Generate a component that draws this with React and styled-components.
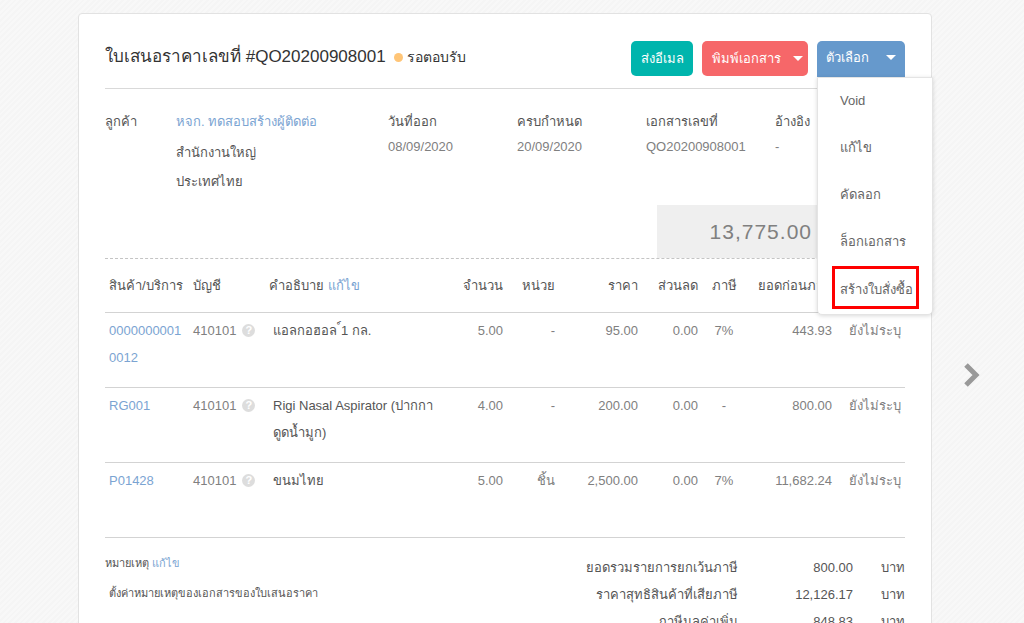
import React from 'react';
import styled, { createGlobalStyle } from 'styled-components';

const GlobalStyle = createGlobalStyle`
  *, *::before, *::after {
    box-sizing: border-box;
  }
  body {
    margin: 0;
    min-height: 100vh;
    background: #f7f7f7 repeating-linear-gradient(135deg, #f8f8f8 0 2px, #f5f5f5 2px 4px);
    color: #808080;
    font-family: 'Liberation Sans', Arial, sans-serif;
    font-size: 13px;
    line-height: 27px;
    overflow: hidden;
  }
  button {
    font: inherit;
    border: none;
    cursor: pointer;
  }
`;

const Page = styled.div`
  display: grid;
  grid-template-columns: 78px minmax(0, 1fr) 92px;
  padding-top: 13px;
  height: 100vh;
`;

const Card = styled.main`
  grid-column: 2;
  min-height: 720px;
  padding: 27px 26px;
  background: #fff;
  border: 1px solid #e2e2e2;
  border-radius: 4px;
`;

const NextButton = styled.button`
  justify-self: start;
  align-self: start;
  margin: 349px 0 0 30px;
  padding: 0;
  width: 18px;
  height: 26px;
  background: none;
  svg {
    display: block;
  }
`;

const Header = styled.header`
  display: flex;
  align-items: flex-start;
  height: 48px;
  border-bottom: 1px solid #d9d9d9;
`;

const Title = styled.h1`
  margin: 0;
  padding-top: 2px;
  color: #333;
  font-size: 17px;
  font-weight: normal;
`;

const Status = styled.span`
  display: flex;
  align-items: center;
  gap: 4px;
  margin: 3px auto 0 8px;
  color: #333;
  font-size: 14px;
  &::before {
    content: '';
    width: 9px;
    height: 9px;
    border-radius: 50%;
    background: #ffc577;
  }
`;

const Actions = styled.div`
  display: flex;
  gap: 9px;
`;

const Dropdown = styled.div`
  position: relative;
`;

const Button = styled.button`
  display: flex;
  align-items: center;
  justify-content: ${(props) => (props.$center ? 'center' : 'space-between')};
  width: ${(props) => props.$width};
  height: ${(props) => (props.$open ? '36px' : '35px')};
  padding: ${(props) => (props.$open ? '0 9px 3px' : '0 5px 0 10px')};
  ${(props) => props.$center && 'padding: 0;'}
  border-radius: ${(props) => (props.$open ? '5px 5px 0 0' : '5px')};
  background: ${(props) => props.$color};
  color: #fff;
  white-space: nowrap;
`;

const Caret = styled.span`
  border: 5px solid transparent;
  border-top-color: #fff;
  border-bottom: none;
`;

const Menu = styled.ul`
  position: absolute;
  top: 100%;
  left: 0;
  z-index: 2;
  width: 116px;
  margin: 0;
  padding: 0 0 5px;
  list-style: none;
  background: #fff;
  border: 1px solid #e4e4e4;
  border-radius: 0 0 5px 5px;
  box-shadow: 0 1px 4px rgba(0, 0, 0, 0.15);
`;

const MenuItem = styled.li`
  display: flex;
  align-items: center;
  height: ${(props) => (props.$marked ? '43px' : '47px')};
  margin: ${(props) => (props.$marked ? '0 13px 0 14px' : '0')};
  padding: ${(props) => (props.$marked ? '3px 0 0 5px' : '0 0 2px 22px')};
  border: ${(props) => (props.$marked ? '3px solid #f00' : 'none')};
`;

const MenuLink = styled.a`
  color: #666;
  text-decoration: none;
  white-space: nowrap;
`;

const Link = styled.a`
  color: #7ba4d2;
  text-decoration: none;
`;

const Info = styled.section`
  display: grid;
  grid-template-columns: 71px minmax(0, 212px) repeat(4, minmax(0, 129px));
  height: 116px;
  padding-top: 19px;
`;

const Label = styled.div`
  color: #555;
  line-height: 27px;
  white-space: nowrap;
`;

const Address = styled.div`
  padding-top: 3px;
  color: #555;
  line-height: 29px;
`;

const Value = styled.div`
  line-height: 24px;
`;

const Summary = styled.div`
  display: flex;
  justify-content: flex-end;
  border-bottom: 1px dashed #c4c4c4;
`;

const Amount = styled.div`
  width: 31%;
  height: 53px;
  padding-right: 93px;
  background: #efefef;
  font-size: 21px;
  line-height: 53px;
  letter-spacing: 1px;
  text-align: right;
`;

const Table = styled.table`
  width: 100%;
  table-layout: fixed;
  border-collapse: collapse;
`;

const Th = styled.th`
  height: 53px;
  width: ${(props) => props.$width};
  padding: 0 4px;
  border-bottom: 1px solid #d3d3d3;
  color: #555;
  font-weight: normal;
  text-align: ${(props) => props.$align || 'left'};
  white-space: nowrap;
`;

const Td = styled.td`
  height: 75px;
  padding: 4px ${(props) => (props.$inset ? '8px' : '4px')} 0;
  border-bottom: 1px solid #d3d3d3;
  color: ${(props) => (props.$inset ? '#555' : '#808080')};
  text-align: ${(props) => props.$align || 'left'};
  vertical-align: top;
  word-break: ${(props) => (props.$breakAll ? 'break-all' : 'normal')};
`;

const Help = styled.span`
  display: inline-block;
  width: 13px;
  height: 13px;
  margin-left: 6px;
  border-radius: 50%;
  background: #ddd;
  color: #fff;
  font-size: 11px;
  font-weight: bold;
  line-height: 13px;
  text-align: center;
  vertical-align: 1px;
`;

const Footer = styled.section`
  display: flex;
  justify-content: space-between;
  padding-top: 12px;
  color: #555;
`;

const Remarks = styled.div`
  font-size: 11px;
`;

const Note = styled.p`
  margin: 3px 0 0 4px;
`;

const Totals = styled.table`
  margin-top: 4px;
  border-collapse: collapse;
  text-align: right;
  th {
    padding: 0;
    font-weight: normal;
  }
  td {
    width: 115px;
    padding: 0;
  }
  td + td {
    width: 52px;
  }
`;

const menuItems = ['Void', 'แก้ไข', 'คัดลอก', 'ล็อกเอกสาร', 'สร้างใบสั่งซื้อ'];

const details = [
  ['วันที่ออก', '08/09/2020'],
  ['ครบกำหนด', '20/09/2020'],
  ['เอกสารเลขที่', 'QO20200908001'],
  ['อ้างอิง', '-'],
];

const items = [
  { code: '00000000010012', name: 'แอลกอฮอล\u00a0์1 กล.', qty: '5.00', unit: '-', price: '95.00', tax: '7%', total: '443.93' },
  { code: 'RG001', name: 'Rigi Nasal Aspirator (ปากกาดูดน้ำมูก)', qty: '4.00', unit: '-', price: '200.00', tax: '-', total: '800.00' },
  { code: 'P01428', name: 'ขนมไทย', qty: '5.00', unit: 'ชิ้น', price: '2,500.00', tax: '7%', total: '11,682.24' },
];

const totals = [
  ['ยอดรวมรายการยกเว้นภาษี', '800.00'],
  ['ราคาสุทธิสินค้าที่เสียภาษี', '12,126.17'],
  ['ภาษีมูลค่าเพิ่ม', '848.83'],
];

const App = () => {
  return (
    <Page>
      <GlobalStyle />
      <Card>
        <Header>
          <Title>ใบเสนอราคาเลขที่ #QO20200908001</Title>
          <Status>รอตอบรับ</Status>
          <Actions>
            <Button $center $width="62px" $color="#00b5ad">ส่งอีเมล</Button>
            <Button $width="106px" $color="#f66769">
              พิมพ์เอกสาร <Caret />
            </Button>
            <Dropdown>
              <Button $open $width="88px" $color="#6699cc" aria-expanded="true">
                ตัวเลือก <Caret />
              </Button>
              <Menu>
                {menuItems.map((item, i) => (
                  <MenuItem key={item} $marked={i === menuItems.length - 1}>
                    <MenuLink href="#">{item}</MenuLink>
                  </MenuItem>
                ))}
              </Menu>
            </Dropdown>
          </Actions>
        </Header>

        <Info>
          <Label>ลูกค้า</Label>
          <div>
            <Label><Link href="#">หจก. ทดสอบสร้างผู้ติดต่อ</Link></Label>
            <Address>
              <div>สำนักงานใหญ่</div>
              <div>ประเทศไทย</div>
            </Address>
          </div>
          {details.map(([label, value]) => (
            <div key={label}>
              <Label>{label}</Label>
              <Value>{value}</Value>
            </div>
          ))}
        </Info>

        <Summary>
          <Amount>13,775.00</Amount>
        </Summary>

        <Table>
          <thead>
            <tr>
              <Th $width="84px">สินค้า/บริการ</Th>
              <Th $width="76px">บัญชี</Th>
              <Th>คำอธิบาย <Link href="#">แก้ไข</Link></Th>
              <Th $width="60px" $align="right">จำนวน</Th>
              <Th $width="52px" $align="right">หน่วย</Th>
              <Th $width="83px" $align="right">ราคา</Th>
              <Th $width="60px" $align="right">ส่วนลด</Th>
              <Th $width="44px" $align="center">ภาษี</Th>
              <Th $width="90px" $align="right">ยอดก่อนภาษี</Th>
              <Th $width="69px" />
            </tr>
          </thead>
          <tbody>
            {items.map((item) => (
              <tr key={item.code}>
                <Td $breakAll><Link href="#">{item.code}</Link></Td>
                <Td>410101<Help>?</Help></Td>
                <Td $inset>{item.name}</Td>
                <Td $align="right">{item.qty}</Td>
                <Td $align="right">{item.unit}</Td>
                <Td $align="right">{item.price}</Td>
                <Td $align="right">0.00</Td>
                <Td $align="center">{item.tax}</Td>
                <Td $align="right">{item.total}</Td>
                <Td $align="right">ยังไม่ระบุ</Td>
              </tr>
            ))}
          </tbody>
        </Table>

        <Footer>
          <Remarks>
            <div>หมายเหตุ <Link href="#">แก้ไข</Link></div>
            <Note>ตั้งค่าหมายเหตุของเอกสารของใบเสนอราคา</Note>
          </Remarks>
          <Totals>
            <tbody>
              {totals.map(([label, value]) => (
                <tr key={label}>
                  <th scope="row">{label}</th>
                  <td>{value}</td>
                  <td>บาท</td>
                </tr>
              ))}
            </tbody>
          </Totals>
        </Footer>
      </Card>
      <NextButton aria-label="Next document">
        <svg width="18" height="26" viewBox="0 0 18 26">
          <path d="M4 3 L14 13 L4 23" fill="none" stroke="#999" strokeWidth="5" />
        </svg>
      </NextButton>
    </Page>
  );
};

export default App;
